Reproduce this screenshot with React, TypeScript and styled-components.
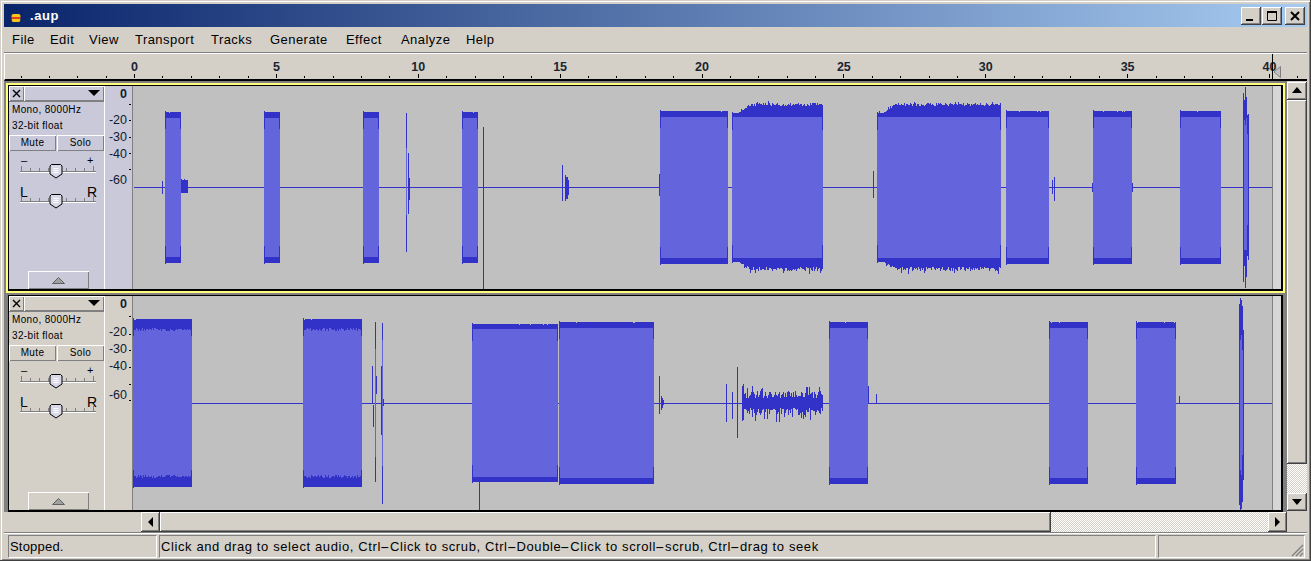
import { FC, Fragment, useMemo } from 'react'
import styled, { createGlobalStyle, css } from 'styled-components'

const GlobalStyle = createGlobalStyle`
  html, body {
    margin: 0;
    padding: 0;
    width: 1311px;
    height: 561px;
    overflow: hidden;
    background: #d4d0c8;
  }
`

const raised = css`
  background: #d4d0c8;
  box-shadow: inset -1px -1px #404040, inset 1px 1px #fff, inset -2px -2px #808080;
`

const dither = css`
  background: repeating-conic-gradient(#fff 0 25%, #d4d0c8 0 50%) 0 0 / 2px 2px;
`

const menuItems: [string, number][] = [
  ['File', 38], ['Edit', 39], ['View', 46], ['Transport', 76], ['Tracks', 59],
  ['Generate', 76], ['Effect', 55], ['Analyze', 65], ['Help', 45],
]

const statusHint = 'Click and drag to select audio, Ctrl-Click to scrub, Ctrl-Double-Click to scroll-scrub, Ctrl-drag to seek'

type Block = { x0: number; x1: number; top: number; bot: number; band: number; noise?: number; ramp?: number; jag?: number }
type Spike = { x: number; y0: number; y1: number; light?: boolean }
type Burst = { x0: number; x1: number; mid: number }

const track1Blocks: Block[] = [
  { x0: 165, x1: 181, top: 112, bot: 263, band: 6 },
  { x0: 264, x1: 280, top: 112, bot: 263, band: 6 },
  { x0: 363, x1: 379, top: 112, bot: 263, band: 6 },
  { x0: 462, x1: 478, top: 112, bot: 263, band: 6 },
  { x0: 660, x1: 728, top: 111, bot: 264, band: 6 },
  { x0: 732, x1: 823, top: 113, bot: 262, band: 4, noise: 9, ramp: 12 },
  { x0: 877, x1: 1001, top: 113, bot: 262, band: 4, noise: 9, ramp: 12 },
  { x0: 1006, x1: 1049, top: 111, bot: 264, band: 6 },
  { x0: 1093, x1: 1132, top: 111, bot: 264, band: 6 },
  { x0: 1180, x1: 1221, top: 111, bot: 264, band: 6 },
]

const track1Spikes: Spike[] = [
  { x: 162, y0: 181, y1: 194 },
  { x: 181, y0: 179, y1: 193 }, { x: 182, y0: 180, y1: 193 }, { x: 183, y0: 180, y1: 193 },
  { x: 184, y0: 179, y1: 193 }, { x: 185, y0: 180, y1: 193 }, { x: 186, y0: 180, y1: 193 }, { x: 187, y0: 180, y1: 193 },
  { x: 406, y0: 113, y1: 252 }, { x: 406, y0: 148, y1: 215, light: true }, { x: 408, y0: 153, y1: 214 }, { x: 409, y0: 178, y1: 200 },
  { x: 483, y0: 127, y1: 290 },
  { x: 562, y0: 165, y1: 201 }, { x: 565, y0: 175, y1: 201 }, { x: 566, y0: 177, y1: 199 }, { x: 567, y0: 177, y1: 199 }, { x: 568, y0: 180, y1: 195 },
  { x: 659, y0: 174, y1: 196 },
  { x: 873, y0: 171, y1: 198 },
  { x: 1052, y0: 180, y1: 194 }, { x: 1054, y0: 177, y1: 201 },
  { x: 1092, y0: 183, y1: 192 }, { x: 1132, y0: 183, y1: 192 },
  { x: 1243, y0: 93, y1: 282 }, { x: 1244, y0: 100, y1: 266 }, { x: 1245, y0: 87, y1: 288 }, { x: 1246, y0: 97, y1: 277 },
  { x: 1247, y0: 115, y1: 256 }, { x: 1248, y0: 114, y1: 260 },
  { x: 1244, y0: 120, y1: 250, light: true }, { x: 1245, y0: 125, y1: 250, light: true },
  { x: 1246, y0: 118, y1: 250, light: true }, { x: 1247, y0: 134, y1: 225, light: true },
]

const track2Blocks: Block[] = [
  { x0: 133, x1: 192, top: 319, bot: 487, band: 9, jag: 3 },
  { x0: 303, x1: 362, top: 319, bot: 487, band: 9, jag: 3 },
  { x0: 472, x1: 558, top: 324, bot: 482, band: 5 },
  { x0: 559, x1: 654, top: 322, bot: 484, band: 6 },
  { x0: 829, x1: 868, top: 322, bot: 484, band: 6 },
  { x0: 1049, x1: 1088, top: 322, bot: 484, band: 6 },
  { x0: 1136, x1: 1176, top: 322, bot: 484, band: 6 },
]

const track2Spikes: Spike[] = [
  { x: 372, y0: 366, y1: 404 }, { x: 373, y0: 405, y1: 427 },
  { x: 375, y0: 322, y1: 482 }, { x: 375, y0: 349, y1: 457, light: true }, { x: 376, y0: 376, y1: 394 },
  { x: 381, y0: 366, y1: 435 }, { x: 382, y0: 323, y1: 504 }, { x: 382, y0: 340, y1: 466, light: true }, { x: 383, y0: 399, y1: 406 },
  { x: 479, y0: 477, y1: 510 }, { x: 479, y0: 325, y1: 330 },
  { x: 659, y0: 376, y1: 414 }, { x: 661, y0: 396, y1: 410 }, { x: 662, y0: 398, y1: 408 }, { x: 663, y0: 400, y1: 405 },
  { x: 726, y0: 384, y1: 422 }, { x: 732, y0: 392, y1: 419 }, { x: 737, y0: 367, y1: 438 },
  { x: 742, y0: 386, y1: 421 }, { x: 743, y0: 384, y1: 420 },
  { x: 868, y0: 386, y1: 404 }, { x: 876, y0: 394, y1: 404 }, { x: 1179, y0: 396, y1: 404 },
  { x: 1239, y0: 304, y1: 505 }, { x: 1240, y0: 298, y1: 510 }, { x: 1241, y0: 300, y1: 509 }, { x: 1242, y0: 306, y1: 502 },
  { x: 1243, y0: 330, y1: 480 },
  { x: 1240, y0: 340, y1: 470, light: true }, { x: 1241, y0: 335, y1: 475, light: true }, { x: 1242, y0: 350, y1: 455, light: true },
]

const rng = (seed: number) => () => {
  seed = (seed * 1664525 + 1013904223) % 4294967296
  return seed / 4294967296
}

const buildWave = (blocks: Block[], spikes: Spike[], seed: number, burst?: Burst) => {
  const rand = rng(seed)
  let dark = ''
  let light = ''
  blocks.forEach(b => {
    for (let x = b.x0; x < b.x1; x++) {
      let up = 0
      let down = 0
      let inner = b.band
      if (b.noise) {
        const grown = Math.min(1, Math.max(0, (x - b.x0 - 6) / b.ramp!))
        up = grown * 7 + rand() * 3 * grown
        down = grown * 5 + rand() * 4 * grown
        if (rand() < 0.06) up += 2
        if (rand() < 0.08) down += 3
      } else if (rand() < 0.05) {
        up = -1
      }
      if (b.jag) inner += Math.round(rand() * b.jag)
      const t = Math.round(b.top - up)
      const u = Math.round(b.bot + down)
      dark += `M${x} ${t}V${u}`
      light += `M${x} ${b.top + inner}V${b.bot - inner}`
    }
  })
  let edges = ''
  blocks.forEach(b => {
    // the sharp attack at each end of a burst
    const span = 17
    edges += `M${b.x0} ${b.top - 1}V${b.top + span}M${b.x0} ${b.bot - span}V${b.bot + 1}`
    edges += `M${b.x1 - 1} ${b.top}V${b.top + span}M${b.x1 - 1} ${b.bot - span}V${b.bot}`
  })
  if (burst) {
    for (let x = burst.x0; x < burst.x1; x++) {
      const up = 5 + rand() * 7 + (rand() < 0.15 ? 6 : 0)
      const down = 5 + rand() * 7 + (rand() < 0.15 ? 8 : 0)
      dark += `M${x} ${Math.round(burst.mid - up)}V${Math.round(burst.mid + down)}`
    }
  }
  let lightSpikes = ''
  spikes.forEach(s => {
    if (s.light) lightSpikes += `M${s.x} ${s.y0}V${s.y1}`
    else dark += `M${s.x} ${s.y0}V${s.y1}`
  })
  return { dark, light, edges, lightSpikes }
}

const Wave: FC<{ top: number; height: number; mid: number; blocks: Block[]; spikes: Spike[]; seed: number; burst?: Burst }> = ({ top, height, mid, blocks, spikes, seed, burst }) => {
  const { dark, light, edges, lightSpikes } = useMemo(() => buildWave(blocks, spikes, seed, burst), [blocks, spikes, seed, burst])
  return (
    <WaveArea>
      <svg width={1139} height={height} viewBox={`133 ${top} 1139 ${height}`} shapeRendering="crispEdges" style={{ display: 'block' }}>
        <g transform="translate(0.5 0)" fill="none" strokeWidth={1}>
          <path d={`M133 ${mid}H1272`} transform="translate(0 0.5)" stroke="#3232c8" />
          <path d={dark} stroke="#3232c8" />
          <path d={light} stroke="#6464dc" />
          <path d={edges} stroke="#3232c8" />
          <path d={lightSpikes} stroke="#6464dc" />
        </g>
      </svg>
      <WaveEnd />
    </WaveArea>
  )
}

const GainSlider: FC<{ left: string; right: string; big?: boolean }> = ({ left, right, big }) => {
  const ticks = [0, 9, 18, 27, 36, 45, 54, 63, 72]
  return (
    <svg width={80} height={30} viewBox="0 0 80 30" style={{ display: 'block' }}>
      <text x={big ? 0 : 1} y={big ? 13 : 10} fontFamily="Liberation Sans, sans-serif" fontSize={big ? 14 : 11} fill="#000">{left}</text>
      <text x={67} y={big ? 13 : 10} fontFamily="Liberation Sans, sans-serif" fontSize={big ? 14 : 11} fill="#000">{right}</text>
      <g shapeRendering="crispEdges">
        {ticks.map(t => (
          <rect key={t} x={t + 1} y={t === 0 || t === 72 ? 12 : 14} width={1} height={t === 0 || t === 72 ? 5 : 3} fill="#808080" />
        ))}
        <rect x={0} y={17} width={76} height={1} fill="#808080" />
        <rect x={0} y={18} width={76} height={1} fill="#fff" />
      </g>
      <path d="M31.5 10.5h9l1.5 1.5v8l-6 4-6-4v-8z" fill="#d8d8e8" stroke="#000" />
      <path d="M33.5 14.5h5M33.5 16.5h5M33.5 18.5h5" stroke="#fff" />
    </svg>
  )
}

const CollapseIcon = () => (
  <svg width={13} height={7} viewBox="0 0 13 7"><path d="M6.5 0.5L12.5 6.5H0.5z" fill="#a0a0a0" stroke="#606060" /></svg>
)

const ArrowIcon: FC<{ dir: 'up' | 'down' | 'left' | 'right' }> = ({ dir }) => {
  const d = { up: 'M0 7L5 1L10 7z', down: 'M0 2H10L5 8z', left: 'M7 0V10L2 5z', right: 'M2 0V10L7 5z' }[dir]
  return <svg width={10} height={10} viewBox="0 0 10 10"><path d={d} fill="#000" /></svg>
}

const Panel: FC<{ selected?: boolean }> = ({ selected }) => (
  <TrackPanel $selected={selected}>
    <PanelHeader>
      <CloseBox>
        <svg width={9} height={9} viewBox="0 0 9 9"><path d="M1 1L8 8M8 1L1 8" stroke="#000" strokeWidth={1.4} /></svg>
      </CloseBox>
      <NameBox>
        <svg width={14} height={7} viewBox="0 0 14 7"><path d="M0 0H12L6 6z" fill="#000" /></svg>
      </NameBox>
    </PanelHeader>
    <InfoLine>Mono, 8000Hz</InfoLine>
    <InfoLine>32-bit float</InfoLine>
    <MuteRow>
      <MuteButton>Mute</MuteButton>
      <MuteButton>Solo</MuteButton>
    </MuteRow>
    <Sliders>
      <GainSlider left="–" right="+" />
      <GainSlider left="L" right="R" big />
    </Sliders>
    <CollapseButton><CollapseIcon /></CollapseButton>
  </TrackPanel>
)

const DbRuler: FC<{ selected?: boolean; labels: [string, number][]; ticks: number[] }> = ({ selected, labels, ticks }) => (
  <VRuler $selected={selected}>
    <svg width={27} height={214} viewBox="0 0 27 214" style={{ display: 'block' }}>
      {labels.map(([text, y]) => (
        <text key={text} x={22} y={y} textAnchor="end" fontFamily="Liberation Sans, sans-serif" fontSize={12.5} fontWeight={text === '0' ? 700 : 400} fill="#102030">{text}</text>
      ))}
      <g shapeRendering="crispEdges">
        {ticks.map(y => <rect key={y} x={24} y={y} width={2} height={1} fill="#000" />)}
      </g>
    </svg>
  </VRuler>
)

const TimeRuler = () => {
  const step = 1135 / 40
  const marks = Array.from({ length: 46 }, (_, i) => i - 4)
  return (
    <RulerBar>
      <svg width={1300} height={25} viewBox="5 54 1300 25" style={{ display: 'block' }}>
        {Array.from({ length: 9 }, (_, i) => (
          <text key={i} x={134.5 + i * 5 * step} y={71} textAnchor="middle" fontFamily="Liberation Sans, sans-serif" fontSize={12.5} fontWeight={700} fill="#1a2430">{i * 5}</text>
        ))}
        <g shapeRendering="crispEdges">
          {marks.map(m => {
            const x = Math.round(134 + m * step)
            return <rect key={m} x={x} y={m % 5 === 0 ? 74 : 76} width={1} height={m % 5 === 0 ? 4 : 2} fill="#000" />
          })}
          <rect x={1272} y={54} width={1} height={25} fill="#000" />
        </g>
        <path d="M1274 72L1280.5 66.5V77.5z" fill="#c0c0c0" stroke="#808080" />
      </svg>
    </RulerBar>
  )
}

const track2Burst: Burst = { x0: 744, x1: 823, mid: 403 }

export default function App() {
  return (
    <>
      <GlobalStyle />
      <Window>
        <TitleBar>
          <svg width={16} height={16} viewBox="0 0 16 16" style={{ flex: 'none' }}>
            <path d="M2 11V7a6 6 0 0 1 12 0v4" fill="none" stroke="#0a246a" strokeWidth={1.6} />
            <rect x={3.5} y={6} width={9} height={8} rx={2} fill="#f5c518" />
            <rect x={3.5} y={9} width={9} height={2} fill="#e0401a" />
            <rect x={1} y={9} width={2.5} height={5} fill="#0a246a" />
            <rect x={12.5} y={9} width={2.5} height={5} fill="#0a246a" />
          </svg>
          <TitleText>.aup</TitleText>
          <WindowButtons>
            <WindowButton>
              <svg width={12} height={12} viewBox="0 0 12 12"><rect x={1} y={9} width={7} height={2} fill="#000" /></svg>
            </WindowButton>
            <WindowButton>
              <svg width={12} height={12} viewBox="0 0 12 12"><path d="M1.5 2.5H10.5V10.5H1.5z" fill="none" stroke="#000" /><rect x={1} y={1} width={10} height={2} fill="#000" /></svg>
            </WindowButton>
            <CloseButton>
              <svg width={12} height={12} viewBox="0 0 12 12"><path d="M2 2L10 10M10 2L2 10" stroke="#000" strokeWidth={2} /></svg>
            </CloseButton>
          </WindowButtons>
        </TitleBar>
        <MenuBar>
          {menuItems.map(([item, w]) => <MenuItem key={item} $w={w}>{item}</MenuItem>)}
        </MenuBar>
        <TimeRuler />
        <Main>
          <TrackColumn>
            <SelectedFrame>
              <TrackBody>
                <Panel selected />
                <DbRuler selected labels={[['0', 12], ['-20', 38], ['-30', 55], ['-40', 72], ['-60', 98]]} ticks={[18, 34, 51, 67, 83]} />
                <Wave top={86} height={203} mid={187} blocks={track1Blocks} spikes={track1Spikes} seed={7} />
              </TrackBody>
            </SelectedFrame>
            <PlainFrame>
              <TrackBody>
                <Panel />
                <DbRuler labels={[['0', 12], ['-20', 40], ['-30', 57], ['-40', 74], ['-60', 103]]} ticks={[20, 38, 54, 71, 88, 104]} />
                <Wave top={296} height={214} mid={403} blocks={track2Blocks} spikes={track2Spikes} seed={31} burst={track2Burst} />
              </TrackBody>
            </PlainFrame>
          </TrackColumn>
          <VScroll>
            <ScrollButton $h={18}><ArrowIcon dir="up" /></ScrollButton>
            <VThumb />
            <VTrough />
            <ScrollButton $h={18}><ArrowIcon dir="down" /></ScrollButton>
          </VScroll>
        </Main>
        <HScroll>
          <HButton><ArrowIcon dir="left" /></HButton>
          <HThumb />
          <HTrough />
          <HButton><ArrowIcon dir="right" /></HButton>
        </HScroll>
        <StatusBar>
          <StatusPane $w={149} $spacing={0.2}>Stopped.</StatusPane>
          <StatusPane $w={997} $spacing={0.61}>
            {statusHint.split('-').map((part, i) => (
              <Fragment key={i}>
                {i > 0 && <WideHyphen>-</WideHyphen>}
                {part}
              </Fragment>
            ))}
          </StatusPane>
          <StatusPane $w={147} $spacing={0}>
            <Grip width={14} height={14} viewBox="0 0 14 14">
              <path d="M13 2L2 13M13 6L6 13M13 10L10 13" stroke="#808080" strokeWidth={1.4} />
            </Grip>
          </StatusPane>
        </StatusBar>
      </Window>
    </>
  )
}

const Window = styled.div`
  box-sizing: border-box;
  width: 1311px;
  height: 561px;
  padding: 4px 4px 3px;
  background: #d4d0c8;
  box-shadow: inset -1px -1px #404040, inset 1px 1px #d4d0c8, inset 2px 2px #fff, inset -2px -2px #808080;
  font-family: 'Liberation Sans', Arial, sans-serif;
  color: #000;
  display: flex;
  flex-direction: column;
`

const TitleBar = styled.div`
  height: 23px;
  flex: none;
  margin-bottom: 1px;
  display: flex;
  align-items: center;
  padding-left: 4px;
  background: linear-gradient(90deg, #0a246a 0%, #a6caf0 100%);
`

const TitleText = styled.span`
  margin-left: 6px;
  color: #fff;
  font-weight: 700;
  font-size: 13px;
  letter-spacing: 0.6px;
`

const WindowButtons = styled.div`
  margin-left: auto;
  margin-right: 2px;
  display: flex;
  gap: 1px;
`

const WindowButton = styled.div`
  ${raised}
  width: 20px;
  height: 18px;
  display: flex;
  align-items: center;
  justify-content: center;
`

const CloseButton = styled(WindowButton)`
  margin-left: 2px;
`

const MenuBar = styled.div`
  height: 25px;
  flex: none;
  display: flex;
  align-items: center;
  box-sizing: border-box;
  padding-bottom: 2px;
  border-bottom: 1px solid #808080;
`

const MenuItem = styled.div<{ $w: number }>`
  box-sizing: border-box;
  width: ${p => p.$w}px;
  padding-left: 8px;
  font-size: 13px;
  letter-spacing: 0.45px;
  white-space: nowrap;
`

const RulerBar = styled.div`
  height: 28px;
  flex: none;
  box-sizing: border-box;
  border-top: 1px solid #fff;
  border-left: 1px solid #fff;
  border-bottom: 2px solid #000;
  overflow: hidden;
`

const Main = styled.div`
  height: 431px;
  flex: none;
  display: flex;
`

const TrackColumn = styled.div`
  box-sizing: border-box;
  width: 1283px;
  flex: none;
  padding: 2px 0 0 2px;
  background: #808080;
`

const SelectedFrame = styled.div`
  box-sizing: border-box;
  width: 1279px;
  height: 210px;
  border: 2px solid #ffff80;
  & > div {
    height: 206px;
  }
`

const PlainFrame = styled.div`
  margin: 2px 0 0 2px;
  width: 1275px;
  height: 217px;
  & > div {
    height: 217px;
  }
`

const TrackBody = styled.div`
  box-sizing: border-box;
  display: flex;
  border: solid #000;
  border-width: 1px 2px 2px 1px;
  overflow: hidden;
`

const TrackPanel = styled.div<{ $selected?: boolean }>`
  width: 96px;
  flex: none;
  box-sizing: border-box;
  border-right: 1px solid #fff;
  display: flex;
  flex-direction: column;
  background: ${p => (p.$selected ? '#c9c9d9' : '#d4d0c8')};
`

const PanelHeader = styled.div`
  height: 15px;
  display: flex;
  border-bottom: 1px solid #808080;
  flex: none;
`

const CloseBox = styled.div`
  width: 15px;
  flex: none;
  display: flex;
  align-items: center;
  justify-content: center;
  box-shadow: inset 1px 1px #fff, inset -1px -1px #808080;
`

const NameBox = styled.div`
  flex: 1;
  display: flex;
  align-items: center;
  justify-content: flex-end;
  padding-right: 2px;
  box-shadow: inset 1px 1px #fff, inset -1px -1px #808080;
`

const InfoLine = styled.div`
  height: 16px;
  padding-left: 3px;
  font-size: 10px;
  line-height: 16px;
  letter-spacing: 0.35px;
  flex: none;
`

const MuteRow = styled.div`
  display: flex;
  gap: 1px;
  height: 16px;
  margin-top: 1px;
  flex: none;
`

const MuteButton = styled.div`
  flex: 1;
  font-size: 10px;
  letter-spacing: 0.35px;
  text-align: center;
  line-height: 15px;
  box-shadow: inset 1px 1px #fff, inset -1px -1px #808080;
`

const Sliders = styled.div`
  flex: none;
  padding: 3px 0 0 11px;
  display: flex;
  flex-direction: column;
`

const CollapseButton = styled.div`
  margin: auto 0 0 19px;
  width: 61px;
  height: 18px;
  flex: none;
  display: flex;
  align-items: center;
  justify-content: center;
  box-shadow: inset 1px 1px #fff, inset -1px -1px #808080, inset 0 0 0 1px #a0a0a0;
`

const VRuler = styled.div<{ $selected?: boolean }>`
  width: 28px;
  flex: none;
  box-sizing: border-box;
  border-right: 1px solid #808080;
  background: ${p => (p.$selected ? '#c9c9d9' : '#d4d0c8')};
`

const WaveArea = styled.div`
  flex: 1;
  display: flex;
  background: #c0c0c0;
`

const WaveEnd = styled.div`
  flex: 1;
  background: #d6d6d6;
  border-left: 1px solid #808080;
`

const VScroll = styled.div`
  width: 20px;
  flex: none;
  display: flex;
  flex-direction: column;
  padding-top: 1px;
  box-sizing: border-box;
  padding-bottom: 1px;
`

const ScrollButton = styled.div<{ $h: number }>`
  ${raised}
  height: ${p => p.$h}px;
  flex: none;
  display: flex;
  align-items: center;
  justify-content: center;
`

const VThumb = styled.div`
  ${raised}
  height: 364px;
  flex: none;
`

const VTrough = styled.div`
  ${dither}
  flex: 1;
`

const HScroll = styled.div`
  height: 20px;
  flex: none;
  display: flex;
  padding-left: 137px;
  padding-right: 20px;
  border-bottom: 1px solid #808080;
`

const HButton = styled.div`
  ${raised}
  width: 19px;
  flex: none;
  display: flex;
  align-items: center;
  justify-content: center;
`

const HThumb = styled.div`
  ${raised}
  width: 891px;
  flex: none;
`

const HTrough = styled.div`
  ${dither}
  flex: 1;
`

const StatusBar = styled.div`
  flex: 1;
  display: flex;
  gap: 2px;
  padding: 1px 0 1px 4px;
  border-top: 1px solid #fff;
`

const StatusPane = styled.div<{ $w: number; $spacing: number }>`
  position: relative;
  box-sizing: border-box;
  width: ${p => p.$w}px;
  flex: none;
  padding-left: 1px;
  font-size: 13px;
  line-height: 21px;
  letter-spacing: ${p => p.$spacing}px;
  white-space: nowrap;
  border: 1px solid;
  border-color: #808080 #fff #fff #808080;
`

const WideHyphen = styled.span`
  display: inline-block;
  margin: 0 2px;
  transform: scaleX(2.2);
`

const Grip = styled.svg`
  position: absolute;
  right: 0;
  bottom: 0;
`
